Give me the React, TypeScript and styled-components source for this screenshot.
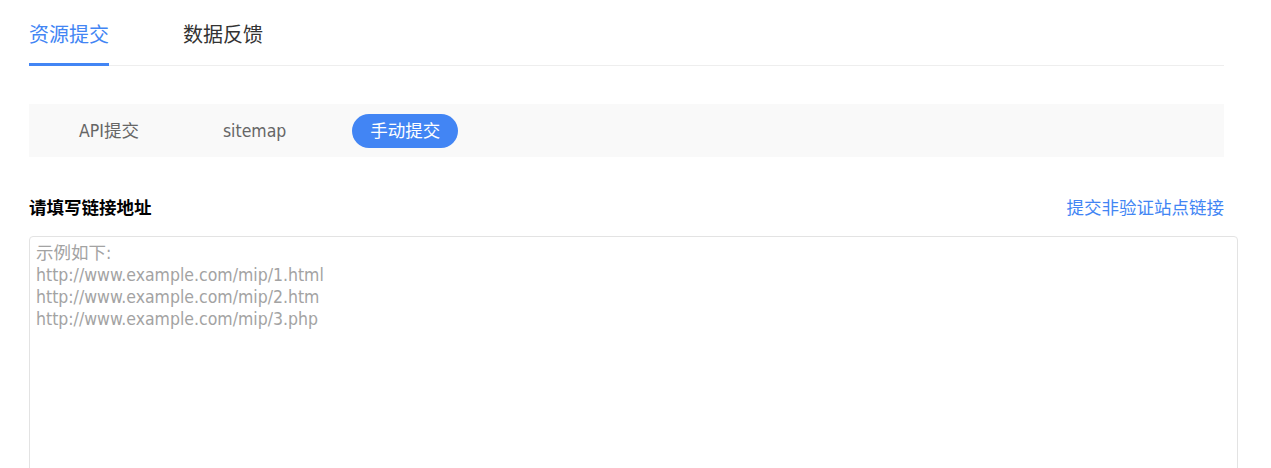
import React from "react";
import styled, { createGlobalStyle } from "styled-components";

const FONT = `"DejaVu Sans Condensed", "Noto Sans CJK SC", sans-serif`;
const BLUE = "#4285f4";

const Global = createGlobalStyle`
  html, body { margin: 0; padding: 0; background: #fff; }
  body { font-family: ${FONT}; }
`;

const Page = styled.div`
  padding: 0 47px 0 29px;
  width: 1195px;
`;

const TabBar = styled.div`
  display: flex;
  gap: 74px;
  border-bottom: 1px solid #eeeeee;
`;

const Tab = styled.div<{ $active?: boolean }>`
  font-size: 20px;
  line-height: 26px;
  padding: 22px 0 15px;
  margin-bottom: -1px;
  border-bottom: 3px solid ${(p) => (p.$active ? BLUE : "transparent")};
  color: ${(p) => (p.$active ? BLUE : "#333")};
  cursor: pointer;
`;

const SubBar = styled.div`
  margin-top: 38px;
  height: 53px;
  background: #f9f9f9;
  display: flex;
  align-items: center;
  gap: 48px;
  padding: 0 32px;
`;

const SubItem = styled.div<{ $active?: boolean }>`
  height: 34px;
  line-height: 34px;
  padding: 0 18px;
  border-radius: 17px;
  font-size: 17.5px;
  color: ${(p) => (p.$active ? "#fff" : "#666")};
  background: ${(p) => (p.$active ? BLUE : "transparent")};
  cursor: pointer;
`;

const LabelRow = styled.div`
  display: flex;
  justify-content: space-between;
  align-items: center;
  height: 24px;
  margin-top: 37px;
  margin-bottom: 18px;
`;

const Label = styled.div`
  font-size: 17.5px;
  font-weight: 700;
  color: #000;
`;

const Link = styled.a`
  font-size: 17.5px;
  color: ${BLUE};
  text-decoration: none;
  cursor: pointer;
`;

const Area = styled.textarea`
  display: block;
  width: 100%;
  box-sizing: content-box;
  height: 300px;
  padding: 5px 6px;
  margin: 0;
  border: 1px solid #e3e3e3;
  border-radius: 4px;
  font-family: ${FONT};
  font-size: 17.5px;
  line-height: 22px;
  color: #333;
  resize: none;
  outline: none;
  &::placeholder {
    color: #a3a3a3;
    opacity: 1;
  }
`;

export default function App() {
  return (
    <>
      <Global />
      <Page>
        <TabBar>
          <Tab $active>资源提交</Tab>
          <Tab>数据反馈</Tab>
        </TabBar>
        <SubBar>
          <SubItem>API提交</SubItem>
          <SubItem>sitemap</SubItem>
          <SubItem $active>手动提交</SubItem>
        </SubBar>
        <LabelRow>
          <Label>请填写链接地址</Label>
          <Link>提交非验证站点链接</Link>
        </LabelRow>
        <Area
          placeholder={
            "示例如下:\nhttp://www.example.com/mip/1.html\nhttp://www.example.com/mip/2.htm\nhttp://www.example.com/mip/3.php"
          }
        />
      </Page>
    </>
  );
}
